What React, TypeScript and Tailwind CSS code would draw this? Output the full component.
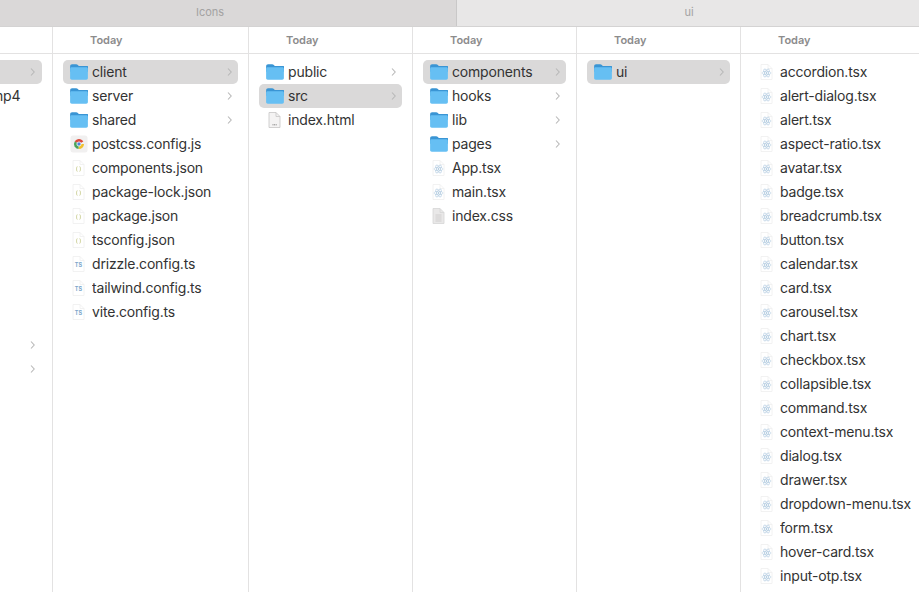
type Kind = 'folder' | 'chrome' | 'json' | 'ts' | 'react' | 'html' | 'css'

interface Item {
  name: string
  kind: Kind
  open?: boolean
}

function FolderIcon() {
  return (
    <svg width="18" height="16" viewBox="1 1 16 14.4" className="shrink-0">
      <path d="M1 3.2C1 2 1.7 1.3 2.8 1.3h3.6c.7 0 1.1.2 1.6.7l.8.8h7.2c1.1 0 1.8.7 1.8 1.8V8H1z" fill="#3a95d4" />
      <path d="M1 5.4C1 4.5 1.6 4 2.4 4h13.2c.8 0 1.4.5 1.4 1.4v8.2c0 .9-.6 1.5-1.5 1.5H2.5c-.9 0-1.5-.6-1.5-1.5z" fill="#66bff3" />
    </svg>
  )
}

function ChromeIcon() {
  return (
    <svg width="18" height="18" viewBox="0 0 18 18" className="shrink-0">
      <rect x="0.5" y="0.5" width="17" height="17" rx="2.5" fill="#f1f0f0" />
      <path d="M9 9 4.7 6.5A5 5 0 0 1 13.3 6.5z" fill="#dc4a3c" />
      <path d="M9 9h5a5 5 0 0 1-5.6 5z" fill="#f0c02e" />
      <path d="M9 9 8.4 14A5 5 0 0 1 4.7 6.5z" fill="#4aa35a" />
      <circle cx="9" cy="9" r="2.1" fill="#4a84dc" stroke="#fff" strokeWidth="0.8" />
    </svg>
  )
}

function PageShape({ fill = '#ffffff', stroke = '#efefef' }: { fill?: string; stroke?: string }) {
  return (
    <>
      <path d="M3.5 1.5h7l4 4v11h-11z" fill={fill} stroke={stroke} strokeWidth="0.8" />
      <path d="M10.5 1.5v4h4" fill="none" stroke={stroke} strokeWidth="0.8" />
    </>
  )
}

function FileIcon({ kind }: { kind: Kind }) {
  if (kind === 'folder') return <FolderIcon />
  if (kind === 'chrome') return <ChromeIcon />
  return (
    <svg width="18" height="18" viewBox="0.5 0 18 18" className="shrink-0">
      {kind === 'css' && <PageShape fill="#e9e8e8" stroke="#d6d5d5" />}
      {kind === 'html' && <PageShape fill="#f4f3f3" stroke="#c6c5c5" />}
      {kind !== 'css' && kind !== 'html' && <PageShape />}
      {kind === 'json' && (
        <path d="M7.9 7.7c-.9 0-.7.7-.7 1.4 0 .6-.3.9-.6.9.3 0 .6.3.6.9 0 .7-.2 1.4.7 1.4M10.1 7.7c.9 0 .7.7.7 1.4 0 .6.3.9.6.9-.3 0-.6.3-.6.9 0 .7.2 1.4-.7 1.4" fill="none" stroke="#c3c683" strokeWidth="0.8" />
      )}
      {kind === 'ts' && (
        <text x="9" y="12.2" textAnchor="middle" fontSize="5.5" fontWeight="700" fill="#7da6cb" fontFamily="Inter, sans-serif">TS</text>
      )}
      {kind === 'react' && (
        <g fill="none" stroke="#a5c2da" strokeWidth="0.5">
          <ellipse cx="9" cy="10" rx="4.6" ry="1.8" />
          <ellipse cx="9" cy="10" rx="4.6" ry="1.8" transform="rotate(60 9 10)" />
          <ellipse cx="9" cy="10" rx="4.6" ry="1.8" transform="rotate(120 9 10)" />
          <circle cx="9" cy="10" r="0.7" fill="#8fb3cf" stroke="none" />
        </g>
      )}
      {kind === 'html' && <path d="M7 13.8h1M8.6 13.8h1M10.2 13.8h1" stroke="#7d7d7d" strokeWidth="1" />}
      {kind === 'css' && <path d="M6 8h6M6 10h6M6 12h6M6 14h6" stroke="#c9c8c8" strokeWidth="0.8" />}
    </svg>
  )
}

function Chevron() {
  return (
    <svg width="7" height="10" viewBox="0 0 7 10" className="shrink-0">
      <path d="M2 1.5 5.2 5 2 8.5" fill="none" stroke="#b8b8b8" strokeWidth="1.1" />
    </svg>
  )
}

function Row({ item }: { item: Item }) {
  const isFolder = item.kind === 'folder'
  return (
    <div className={`flex h-6 items-center rounded-[5px] pl-[7px] pr-[5px] ${item.open ? 'bg-[#dad9d9]' : ''}`}>
      <span className="flex w-[22px] shrink-0 items-center">
        <FileIcon kind={item.kind} />
      </span>
      <span className="flex-1 truncate whitespace-nowrap pb-[2px] text-[14px] tracking-[-0.18px] text-[#333333]">{item.name}</span>
      {isFolder && <Chevron />}
    </div>
  )
}

function Column({ width, items }: { width: string; items: Item[] }) {
  return (
    <div className={`shrink-0 border-r border-[#e3e2e2] ${width}`}>
      <div className="flex h-[27px] items-center border-b border-[#e3e2e2] pl-[37px] text-[11px] font-semibold text-[#8c8c8c]">
        Today
      </div>
      <div className="flex flex-col px-[10px] pt-[6px]">
        {items.map((item) => (
          <Row key={item.name} item={item} />
        ))}
      </div>
    </div>
  )
}

function FirstColumn() {
  return (
    <div className="w-[53px] shrink-0 overflow-hidden border-r border-[#e3e2e2]">
      <div className="h-[27px] border-b border-[#e3e2e2]" />
      <div className="flex flex-col pt-[6px] pr-[10px]">
        <div className="flex h-6 items-center justify-end rounded-r-[5px] bg-[#dad9d9] pr-[6px]">
          <Chevron />
        </div>
        <div className="flex h-6 items-center whitespace-nowrap pb-[2px] text-[14px] tracking-[-0.18px] text-[#333333]">
          <span className="-ml-[9px]">mp4</span>
        </div>
        <div className="h-[225px]" />
        <div className="flex h-6 items-center justify-end pr-[6px]">
          <Chevron />
        </div>
        <div className="flex h-6 items-center justify-end pr-[6px]">
          <Chevron />
        </div>
      </div>
    </div>
  )
}

const rootItems: Item[] = [
  { name: 'client', kind: 'folder', open: true },
  { name: 'server', kind: 'folder' },
  { name: 'shared', kind: 'folder' },
  { name: 'postcss.config.js', kind: 'chrome' },
  { name: 'components.json', kind: 'json' },
  { name: 'package-lock.json', kind: 'json' },
  { name: 'package.json', kind: 'json' },
  { name: 'tsconfig.json', kind: 'json' },
  { name: 'drizzle.config.ts', kind: 'ts' },
  { name: 'tailwind.config.ts', kind: 'ts' },
  { name: 'vite.config.ts', kind: 'ts' },
]

const clientItems: Item[] = [
  { name: 'public', kind: 'folder' },
  { name: 'src', kind: 'folder', open: true },
  { name: 'index.html', kind: 'html' },
]

const srcItems: Item[] = [
  { name: 'components', kind: 'folder', open: true },
  { name: 'hooks', kind: 'folder' },
  { name: 'lib', kind: 'folder' },
  { name: 'pages', kind: 'folder' },
  { name: 'App.tsx', kind: 'react' },
  { name: 'main.tsx', kind: 'react' },
  { name: 'index.css', kind: 'css' },
]

const componentItems: Item[] = [{ name: 'ui', kind: 'folder', open: true }]

const uiItems: Item[] = [
  'accordion.tsx',
  'alert-dialog.tsx',
  'alert.tsx',
  'aspect-ratio.tsx',
  'avatar.tsx',
  'badge.tsx',
  'breadcrumb.tsx',
  'button.tsx',
  'calendar.tsx',
  'card.tsx',
  'carousel.tsx',
  'chart.tsx',
  'checkbox.tsx',
  'collapsible.tsx',
  'command.tsx',
  'context-menu.tsx',
  'dialog.tsx',
  'drawer.tsx',
  'dropdown-menu.tsx',
  'form.tsx',
  'hover-card.tsx',
  'input-otp.tsx',
].map((name) => ({ name, kind: 'react' as Kind }))

export default function App() {
  return (
    <div className="flex h-[592px] w-[919px] flex-col overflow-hidden bg-white font-['Inter',sans-serif]">
      <div className="flex h-[27px] shrink-0 border-b border-[#d4d3d3] text-[11px] text-[#a3a2a2]">
        <div className="flex w-[457px] items-center justify-center border-r border-[#c9c8c8] bg-[#dad8d8] pb-[2px] pr-[36px]">Icons</div>
        <div className="flex flex-1 items-center justify-center bg-[#e8e7e7] pb-[2px] pl-[2px]">ui</div>
      </div>
      <div className="flex min-h-0 flex-1">
        <FirstColumn />
        <Column width="w-[196px]" items={rootItems} />
        <Column width="w-[164px]" items={clientItems} />
        <Column width="w-[164px]" items={srcItems} />
        <Column width="w-[164px]" items={componentItems} />
        <Column width="w-[196px]" items={uiItems} />
      </div>
    </div>
  )
}
